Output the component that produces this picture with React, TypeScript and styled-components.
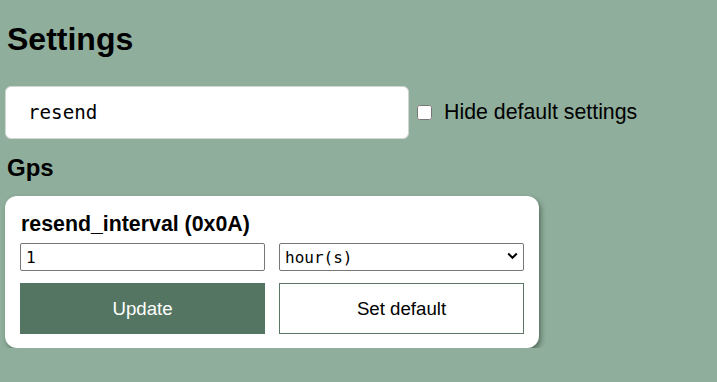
import { useState } from 'react';
import { styled, createGlobalStyle } from 'styled-components';

const GlobalStyle = createGlobalStyle`
  html, body {
    margin: 0;
    padding: 0;
    background-color: #8fae9b;
    font-family: 'Liberation Sans', Arial, sans-serif;
    color: black;
  }
`;

const Page = styled.div`
  padding: 0 5px;
`;

const Title = styled.h1`
  font-size: 32px;
  font-weight: bold;
  margin: 21px 0 0 2px;
  line-height: 37px;
`;

const SearchRow = styled.div`
  display: flex;
  align-items: center;
  margin-top: 28px;
`;

const SearchInput = styled.input`
  box-sizing: border-box;
  width: 404px;
  height: 53px;
  padding: 0 22px;
  border: 1px solid #d2d6d3;
  border-radius: 6px;
  background: white;
  font-family: 'DejaVu Sans Mono', 'Liberation Mono', monospace;
  font-size: 19.2px;
  color: black;
  &:focus {
    outline: none;
  }
`;

const CheckLabel = styled.label`
  display: flex;
  align-items: center;
  gap: 12px;
  margin-left: 8px;
  font-size: 21.33px;
  cursor: pointer;
`;

const CheckBox = styled.input`
  width: 15px;
  height: 15px;
  margin: 0;
`;

const Section = styled.h2`
  font-size: 24px;
  font-weight: bold;
  margin: 15px 0 0 2px;
  line-height: 28px;
`;

const Card = styled.div`
  box-sizing: border-box;
  width: 534px;
  margin-top: 14px;
  padding: 16px 15px 14px;
  background: white;
  border-radius: 12px;
  box-shadow: 2px 3px 5px rgba(40, 60, 48, 0.55);
`;

const CardTitle = styled.h3`
  font-size: 21.33px;
  font-weight: bold;
  margin: 0 0 7px 1px;
  line-height: 24px;
`;

const Grid = styled.div`
  display: grid;
  grid-template-columns: 1fr 1fr;
  gap: 12px 14px;
`;

const ValueInput = styled.input`
  box-sizing: border-box;
  height: 28px;
  padding: 0 5px;
  border: 1px solid #767676;
  border-radius: 2px;
  font-family: 'DejaVu Sans Mono', 'Liberation Mono', monospace;
  font-size: 16px;
  color: black;
  background: white;
`;

const SelectWrap = styled.div`
  position: relative;
  height: 28px;
`;

const UnitSelect = styled.select`
  box-sizing: border-box;
  width: 100%;
  height: 28px;
  padding: 0 5px;
  border: 1px solid #767676;
  border-radius: 2px;
  appearance: none;
  font-family: 'DejaVu Sans Mono', 'Liberation Mono', monospace;
  font-size: 16px;
  color: black;
  background: white;
`;

const Chevron = styled.svg`
  position: absolute;
  right: 6px;
  top: 9px;
  pointer-events: none;
`;

const Button = styled.button<{ $primary?: boolean }>`
  box-sizing: border-box;
  height: 51px;
  border: 1px solid ${(p) => (p.$primary ? '#537561' : '#5c7766')};
  background: ${(p) => (p.$primary ? '#537561' : 'white')};
  color: ${(p) => (p.$primary ? 'white' : 'black')};
  font-family: 'Liberation Sans', Arial, sans-serif;
  font-size: 18.67px;
  cursor: pointer;
`;

export default function App() {
  const [query, setQuery] = useState('resend');
  const [hideDefault, setHideDefault] = useState(false);
  const [value, setValue] = useState('1');
  const [unit, setUnit] = useState('hour');

  return (
    <Page>
      <GlobalStyle />
      <Title>Settings</Title>
      <SearchRow>
        <SearchInput value={query} onChange={(e) => setQuery(e.target.value)} />
        <CheckLabel>
          <CheckBox
            type="checkbox"
            checked={hideDefault}
            onChange={(e) => setHideDefault(e.target.checked)}
          />
          Hide default settings
        </CheckLabel>
      </SearchRow>
      <Section>Gps</Section>
      <Card>
        <CardTitle>resend_interval (0x0A)</CardTitle>
        <Grid>
          <ValueInput value={value} onChange={(e) => setValue(e.target.value)} />
          <SelectWrap>
            <UnitSelect value={unit} onChange={(e) => setUnit(e.target.value)}>
              <option value="second">second(s)</option>
              <option value="minute">minute(s)</option>
              <option value="hour">hour(s)</option>
            </UnitSelect>
            <Chevron width="11" height="8" viewBox="0 0 11 8">
              <path d="M1.2 1.5 L5.5 5.8 L9.8 1.5" fill="none" stroke="black" strokeWidth="2" />
            </Chevron>
          </SelectWrap>
          <Button $primary>Update</Button>
          <Button>Set default</Button>
        </Grid>
      </Card>
    </Page>
  );
}
